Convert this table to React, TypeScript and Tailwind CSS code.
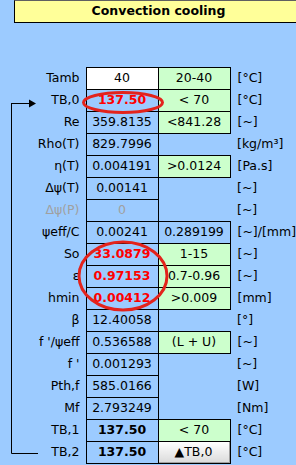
type Row = {
  label: string;
  value: string;
  range?: string;
  unit: string;
  valueTone?: 'red' | 'bold' | 'muted' | 'input';
  rangeTone?: 'green' | 'plain' | 'button';
};

const rows: Row[] = [
  { label: 'Tamb', value: '40', range: '20-40', unit: '[°C]', valueTone: 'input', rangeTone: 'green' },
  { label: 'TB,0', value: '137.50', range: '< 70', unit: '[°C]', valueTone: 'red', rangeTone: 'green' },
  { label: 'Re', value: '359.8135', range: '<841.28', unit: '[~]', rangeTone: 'green' },
  { label: 'Rho(T)', value: '829.7996', unit: '[kg/m³]' },
  { label: 'η(T)', value: '0.004191', range: '>0.0124', unit: '[Pa.s]', rangeTone: 'green' },
  { label: 'Δψ(T)', value: '0.00141', unit: '[~]' },
  { label: 'Δψ(P)', value: '0', unit: '[~]', valueTone: 'muted' },
  { label: 'ψeff/C', value: '0.00241', range: '0.289199', unit: '[~]/[mm]', rangeTone: 'plain' },
  { label: 'So', value: '33.0879', range: '1-15', unit: '[~]', valueTone: 'red', rangeTone: 'green' },
  { label: 'ε', value: '0.97153', range: '0.7-0.96', unit: '[~]', valueTone: 'red', rangeTone: 'green' },
  { label: 'hmin', value: '0.00412', range: '>0.009', unit: '[mm]', valueTone: 'red', rangeTone: 'green' },
  { label: 'β', value: '12.40058', unit: '[°]' },
  { label: "f '/ψeff", value: '0.536588', range: '(L + U)', unit: '[~]', rangeTone: 'green' },
  { label: "f '", value: '0.001293', unit: '[~]' },
  { label: 'Pth,f', value: '585.0166', unit: '[W]' },
  { label: 'Mf', value: '2.793249', unit: '[Nm]' },
  { label: 'TB,1', value: '137.50', range: '< 70', unit: '[°C]', valueTone: 'bold', rangeTone: 'green' },
  { label: 'TB,2', value: '137.50', range: '▲TB,0', unit: '[°C]', valueTone: 'bold', rangeTone: 'button' },
];

function valueClass(tone?: Row['valueTone']) {
  if (tone === 'red') return 'text-[#ff0000] font-bold';
  if (tone === 'bold') return 'font-bold';
  if (tone === 'muted') return 'text-[#a0a0a0]';
  if (tone === 'input') return 'bg-white';
  return '';
}

function RangeCell({ row }: { row: Row }) {
  if (row.rangeTone === 'button') {
    return (
      <td className="p-0 border border-black">
        <div className="h-[21px] flex items-center justify-center bg-gradient-to-b from-white to-[#dcdcdc] border-r border-b border-[#a0a0a0]">
          {row.range}
        </div>
      </td>
    );
  }
  if (row.rangeTone === 'green') {
    return <td className="p-0 border border-black bg-[#ccffcc] text-center">{row.range}</td>;
  }
  if (row.rangeTone === 'plain') {
    return <td className="p-0 border border-black text-center">{row.range}</td>;
  }
  return <td className="p-0" />;
}

export default function App() {
  return (
    <div
      className="relative w-[296px] h-[465px] overflow-hidden bg-[#9ccbff] text-[12.5px] text-black"
      style={{ fontFamily: '"DejaVu Sans", Verdana, sans-serif' }}
    >
      <div className="ml-[14px] w-[288px] h-[23px] bg-[#ffff99] border-t border-t-[#606060] border-l border-b border-black flex items-center justify-center font-bold">
        Convection cooling
      </div>

      <table className="mt-[44px] border-collapse table-fixed w-[296px]">
        <colgroup>
          <col className="w-[86px]" />
          <col className="w-[72px]" />
          <col className="w-[72px]" />
          <col />
        </colgroup>
        <tbody>
          {rows.map((row) => (
            <tr key={row.label} className="h-[22px]">
              <td className={`p-0 pr-[6px] text-right whitespace-nowrap ${row.valueTone === 'muted' ? 'text-[#a0a0a0]' : ''}`}>
                {row.label}
              </td>
              <td className={`p-0 border border-black text-center ${valueClass(row.valueTone)}`}>{row.value}</td>
              <RangeCell row={row} />
              <td className="p-0 pl-[7px] whitespace-nowrap">{row.unit}</td>
            </tr>
          ))}
        </tbody>
      </table>

      <svg className="absolute inset-0 pointer-events-none" width="296" height="465" viewBox="0 0 296 465">
        <path d="M11.5 103.5 V453.5 H38" fill="none" stroke="black" strokeWidth="1" />
        <path d="M11 103.5 H30" fill="none" stroke="black" strokeWidth="1" />
        <polygon points="29,99.5 36,103.5 29,107.5" fill="black" />
        <ellipse cx="123" cy="102.5" rx="39.5" ry="10" fill="none" stroke="#e3231c" strokeWidth="3" />
        <ellipse cx="123" cy="276" rx="44" ry="34" fill="none" stroke="#e3231c" strokeWidth="3" />
      </svg>
    </div>
  );
}
